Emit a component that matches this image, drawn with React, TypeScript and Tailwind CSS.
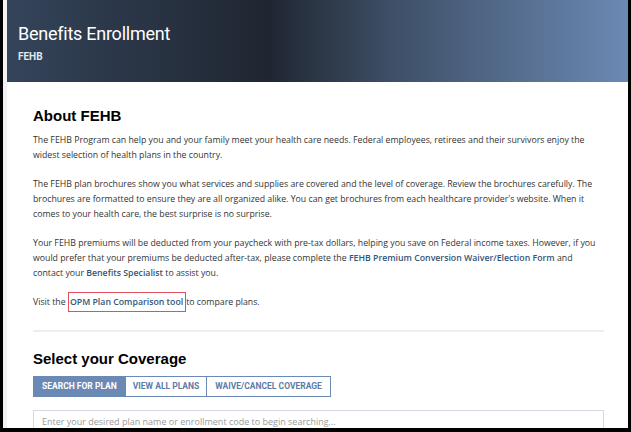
import React from "react";

const body = { fontFamily: '"Open Sans", "Noto Sans", sans-serif' };

function L({ children, className = "" }: { children: React.ReactNode; className?: string }) {
  return <span className={`block whitespace-nowrap ${className}`}>{children}</span>;
}

const link = "font-semibold text-[#34557a]";

export default function App() {
  return (
    <div className="w-[631px] h-[432px] overflow-hidden bg-black pl-[3px] pr-[3px] pb-[4px]">
      <div className="h-full bg-[#f1f1f6] pl-[4px] overflow-hidden">
        <div className="h-full bg-white flex flex-col">
          <div
            className="h-[82px] shrink-0 pl-[11px] pt-[22px] bg-[linear-gradient(90deg,#34445a_0%,#1f2631_42%,#3e4f67_62%,#6b89b3_100%)]"
            style={{ fontFamily: 'Roboto, "Noto Sans", sans-serif' }}
          >
            <div className="text-white text-[18px] leading-[24px] tracking-[-0.25px]">Benefits Enrollment</div>
            <div className="text-[#e4e8ee] text-[10px] font-bold leading-[14px] mt-[4px]">FEHB</div>
          </div>
          <div className="pl-[26px] pr-[24px] pt-[24px]">
            <h2
              className="text-[15px] font-bold leading-[20px] text-black"
              style={{ fontFamily: '"Liberation Sans", Arial, sans-serif' }}
            >
              About FEHB
            </h2>
            <div className="text-[8.75px] leading-[15px] text-[#333] mt-[7px]" style={body}>
              <p>
                <L>The FEHB Program can help you and your family meet your health care needs. Federal employees, retirees and their survivors enjoy the</L>
                <L>widest selection of health plans in the country.</L>
              </p>
              <p className="mt-[14px]">
                <L>The FEHB plan brochures show you what services and supplies are covered and the level of coverage. Review the brochures carefully. The</L>
                <L>brochures are formatted to ensure they are all organized alike. You can get brochures from each healthcare provider's website. When it</L>
                <L>comes to your health care, the best surprise is no surprise.</L>
              </p>
              <p className="mt-[14px]">
                <L>Your FEHB premiums will be deducted from your paycheck with pre-tax dollars, helping you save on Federal income taxes. However, if you</L>
                <L>
                  would prefer that your premiums be deducted after-tax, please complete the{" "}
                  <span className={link}>FEHB Premium Conversion Waiver/Election Form</span> and
                </L>
                <L>
                  contact your <span className={link}>Benefits Specialist</span> to assist you.
                </L>
              </p>
              <p className="mt-[14px]">
                Visit the{" "}
                <span className={`${link} border border-[#e0505e] pl-[1px] pr-[2px] py-[3px]`}>OPM Plan Comparison tool</span>
                to compare plans.
              </p>
            </div>
            <div className="h-[2px] bg-[#eeeeee] mt-[20px]" />
            <h2
              className="text-[15px] font-bold leading-[20px] text-black mt-[17px]"
              style={{ fontFamily: '"Liberation Sans", Arial, sans-serif' }}
            >
              Select your Coverage
            </h2>
            <div
              className="flex mt-[7px] text-[8.5px] font-bold uppercase leading-none"
              style={{ fontFamily: 'Roboto, "Noto Sans", sans-serif' }}
            >
              <div className="h-[21px] px-[8px] flex items-center bg-[#6a89b5] text-white border border-[#6a89b5]">Search for Plan</div>
              <div className="h-[21px] px-[7px] flex items-center bg-white text-[#5d7ca8] border border-[#6a89b5] border-l-0">View all Plans</div>
              <div className="h-[21px] px-[8px] flex items-center bg-white text-[#5d7ca8] border border-[#6a89b5] border-l-0">Waive/Cancel Coverage</div>
            </div>
            <div
              className="mt-[13px] h-[30px] border border-[#d3dae3] pl-[8px] pt-[4px] text-[9px] text-[#9a9a9a]"
              style={body}
            >
              Enter your desired plan name or enrollment code to begin searching...
            </div>
          </div>
        </div>
      </div>
    </div>
  );
}
